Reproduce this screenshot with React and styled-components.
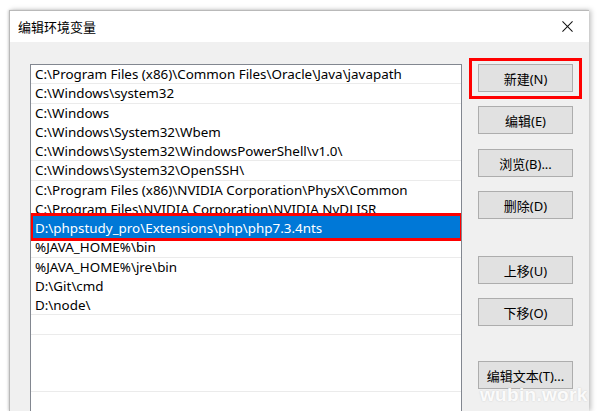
import React from "react";
import styled, { createGlobalStyle, css } from "styled-components";

const GlobalStyle = createGlobalStyle`
  html, body {
    margin: 0;
    padding: 0;
    overflow: hidden;
    background: #ffffff;
  }
  body {
    font-family: "Noto Sans", "Noto Sans CJK SC", sans-serif;
  }
`;

const paths = [
  "C:\\Program Files (x86)\\Common Files\\Oracle\\Java\\javapath",
  "C:\\Windows\\system32",
  "C:\\Windows",
  "C:\\Windows\\System32\\Wbem",
  "C:\\Windows\\System32\\WindowsPowerShell\\v1.0\\",
  "C:\\Windows\\System32\\OpenSSH\\",
  "C:\\Program Files (x86)\\NVIDIA Corporation\\PhysX\\Common",
  "C:\\Program Files\\NVIDIA Corporation\\NVIDIA NvDLISR",
  "D:\\phpstudy_pro\\Extensions\\php\\php7.3.4nts",
  "%JAVA_HOME%\\bin",
  "%JAVA_HOME%\\jre\\bin",
  "D:\\Git\\cmd",
  "D:\\node\\",
  "",
  "",
  "",
  "",
  "",
];

const SELECTED = 8;

const buttons = [
  { label: "新建(N)", top: 0, marked: true },
  { label: "编辑(E)", top: 14 },
  { label: "浏览(B)...", top: 15 },
  { label: "删除(D)", top: 14 },
  { label: "上移(U)", top: 37 },
  { label: "下移(O)", top: 14 },
  { label: "编辑文本(T)...", top: 35 },
];

export default function App() {
  return (
    <>
      <GlobalStyle />
      <Window>
        <TitleBar>
          <Title>编辑环境变量</Title>
          <CloseIcon viewBox="0 0 12 12">
            <path d="M0.5 0.5 L11.5 11.5 M11.5 0.5 L0.5 11.5" />
          </CloseIcon>
        </TitleBar>
        <Body>
          <PathList>
            {paths.map((p, i) => (
              <Row key={i} selected={i === SELECTED} ruled={i % 4 < 2 && i !== SELECTED}>
                {p}
                {i === SELECTED && <Marker />}
              </Row>
            ))}
          </PathList>
          <ButtonColumn>
            {buttons.map((b) => (
              <Button key={b.label} top={b.top} marked={b.marked}>
                {b.label}
              </Button>
            ))}
          </ButtonColumn>
        </Body>
        <Watermark>wubin.work</Watermark>
      </Window>
    </>
  );
}

const Window = styled.div`
  position: relative;
  margin: 10px 0 0 9px;
  width: 580px;
  height: 401px;
  overflow: hidden;
  background: #f0f0f0;
  border: 1px solid #b9b9b9;
  border-right: none;
  border-bottom: none;
  box-shadow: 2px 0 5px rgba(0, 0, 0, 0.25), -1px 0 2px rgba(0, 0, 0, 0.12);
  box-sizing: border-box;
`;

const TitleBar = styled.div`
  display: flex;
  align-items: center;
  justify-content: space-between;
  height: 31px;
  padding: 0 14px 0 8px;
  background: #ffffff;
`;

const Title = styled.span`
  font-family: "Noto Sans CJK SC", sans-serif;
  font-size: 13px;
  color: #000000;
`;

const CloseIcon = styled.svg`
  width: 11px;
  height: 11px;
  stroke: #111;
  stroke-width: 1.1;
  fill: none;
  margin-right: 2px;
`;

const Body = styled.div`
  display: flex;
  align-items: flex-start;
  padding: 22px 16px 0 20px;
`;

const PathList = styled.div`
  width: 432px;
  height: 360px;
  background: #ffffff;
  border: 1px solid #828790;
  border-bottom: none;
  box-sizing: border-box;
  overflow: hidden;
`;

const Row = styled.div`
  position: relative;
  height: 19.25px;
  line-height: 19.25px;
  padding-left: 4px;
  font-size: 13.4px;
  color: #000000;
  white-space: nowrap;
  box-sizing: border-box;
  ${(p) =>
    p.ruled &&
    css`
      border-bottom: 1px solid #ebebeb;
    `}
  ${(p) =>
    p.selected &&
    css`
      color: #ffffff;
      background: #0078d7;
      box-shadow: 0 -3px 0 #0078d7;
    `}
`;

const Marker = styled.span`
  position: absolute;
  top: -6px;
  bottom: -3px;
  left: -1px;
  right: -2px;
  border: 3px solid #ff0000;
  pointer-events: none;
`;

const ButtonColumn = styled.div`
  display: flex;
  flex-direction: column;
  margin-left: 16px;
`;

const Button = styled.div`
  position: relative;
  display: flex;
  align-items: center;
  justify-content: center;
  width: 95px;
  height: 28px;
  margin-top: ${(p) => p.top}px;
  background: #e1e1e1;
  border: 1px solid #adadad;
  box-sizing: border-box;
  font-family: "Noto Sans", "Noto Sans CJK SC", sans-serif;
  font-size: 13px;
  color: #000000;
  ${(p) =>
    p.marked &&
    css`
      &::after {
        content: "";
        position: absolute;
        top: -7px;
        bottom: -8px;
        left: -10px;
        right: -10px;
        border: 3px solid #ff0000;
      }
    `}
`;

const Watermark = styled.span`
  position: absolute;
  left: 470px;
  top: 373px;
  font-family: "Liberation Sans", sans-serif;
  font-weight: bold;
  font-size: 19px;
  color: rgba(255, 255, 255, 0.92);
  text-shadow: 0 0 2px rgba(0, 0, 0, 0.15);
  letter-spacing: 0.3px;
`;
